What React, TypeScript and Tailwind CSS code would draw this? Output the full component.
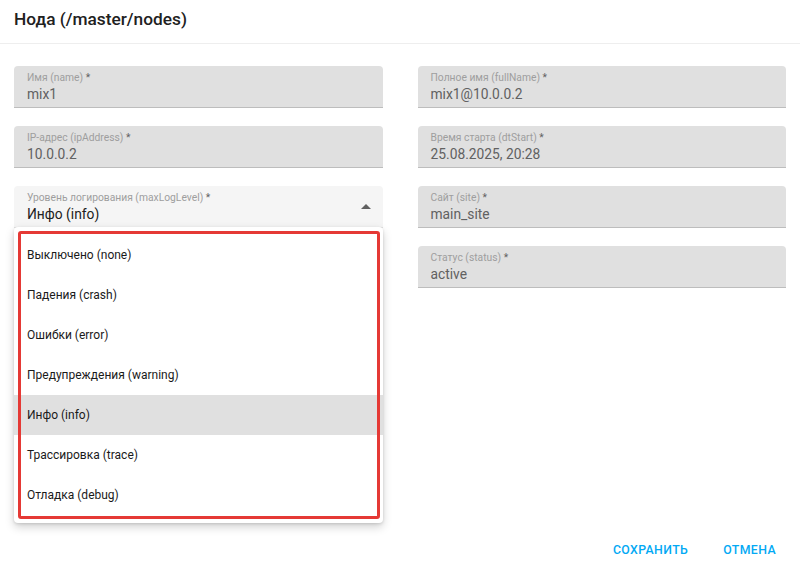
import React from "react";

const font = { fontFamily: "Roboto, 'Liberation Sans', sans-serif" };

function Field({ label, value }: { label: string; value: string }) {
  return (
    <div className="h-[42px] rounded-t bg-[#e0e0e0] border-b border-[#bdbdbd] px-[13px] pt-[6px] flex flex-col">
      <span className="text-[10.3px] leading-[12px] text-[#9e9e9e]">
        {label} <span className="text-[#616161]">*</span>
      </span>
      <span className="text-[13.8px] leading-[18px] text-[#616161] mt-[1px]">{value}</span>
    </div>
  );
}

const levels = [
  "Выключено (none)",
  "Падения (crash)",
  "Ошибки (error)",
  "Предупреждения (warning)",
  "Инфо (info)",
  "Трассировка (trace)",
  "Отладка (debug)",
];

export default function App() {
  return (
    <div style={font} className="w-[800px] h-[569px] bg-white relative overflow-hidden">
      <div className="h-[44px] border-b border-[#eeeeee] px-[14px] flex items-center">
        <h2 className="text-[17.3px] font-medium text-[#212121] pb-[3px]">Нода (/master/nodes)</h2>
      </div>

      <div className="grid grid-cols-2 gap-x-[35px] px-[14px] pt-[22px]">
        <div className="flex flex-col gap-[18px]">
          <Field label="Имя (name)" value="mix1" />
          <Field label="IP-адрес (ipAddress)" value="10.0.0.2" />
          <div className="relative">
            <div className="h-[42px] rounded-t bg-[#f5f5f5] border-b border-[#e0e0e0] pl-[13px] pr-[12px] pt-[6px] flex items-start justify-between">
              <div className="flex flex-col">
                <span className="text-[10.3px] leading-[12px] text-[#9e9e9e]">
                  Уровень логирования (maxLogLevel) <span className="text-[#616161]">*</span>
                </span>
                <span className="text-[13.8px] leading-[18px] text-[#212121] mt-[1px]">Инфо (info)</span>
              </div>
              <svg width="10" height="5" viewBox="0 0 10 5" className="mt-[12px]">
                <path d="M0 5 L5 0 L10 5 Z" fill="#616161" />
              </svg>
            </div>
            <div className="absolute left-0 right-0 top-[41px] z-10 bg-white rounded shadow-[0_4px_10px_rgba(0,0,0,0.18),0_1px_3px_rgba(0,0,0,0.12)] py-[8px]">
              {levels.map((l) => (
                <div
                  key={l}
                  className={`h-[40px] flex items-center px-[13px] text-[12px] text-[#1a1a1a] ${
                    l === "Инфо (info)" ? "bg-[#e0e0e0]" : ""
                  }`}
                >
                  {l}
                </div>
              ))}
              <div className="absolute left-[4px] right-[3px] top-[4px] bottom-[4px] border-[3px] border-[#e53935] rounded-[3px] pointer-events-none" />
            </div>
          </div>
        </div>
        <div className="flex flex-col gap-[18px]">
          <Field label="Полное имя (fullName)" value="mix1@10.0.0.2" />
          <Field label="Время старта (dtStart)" value="25.08.2025, 20:28" />
          <Field label="Сайт (site)" value="main_site" />
          <Field label="Статус (status)" value="active" />
        </div>
      </div>

      <div className="absolute bottom-[1px] right-[14px] flex gap-[15px]">
        <button className="h-[36px] px-[10px] text-[12.3px] font-medium tracking-[0.4px] text-[#03a9f4]">СОХРАНИТЬ</button>
        <button className="h-[36px] px-[10px] text-[12.3px] font-medium tracking-[0.4px] text-[#03a9f4]">ОТМЕНА</button>
      </div>
    </div>
  );
}
